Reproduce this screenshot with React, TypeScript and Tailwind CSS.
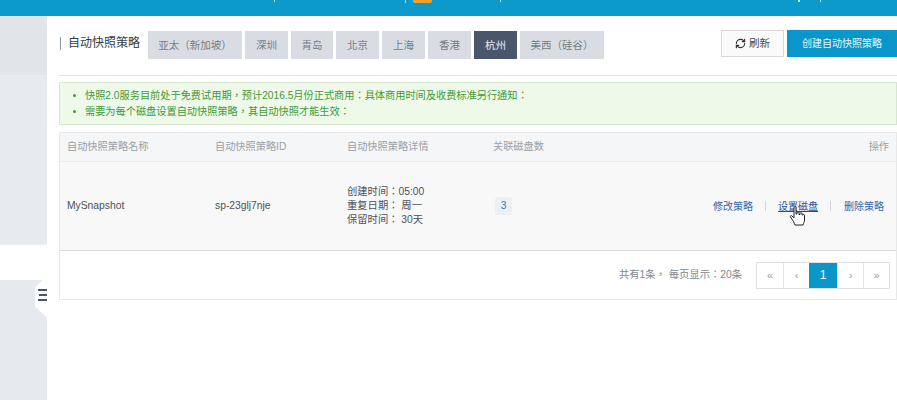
import React from "react";
import { RefreshCw } from "lucide-react";

const font = "font-['Liberation_Sans','Noto_Sans_CJK_TC',sans-serif]";

const regions = [
  { name: "亚太（新加坡）", width: "w-[94px]" },
  { name: "深圳", width: "w-[43px]" },
  { name: "青岛", width: "w-[42px]" },
  { name: "北京", width: "w-[43px]" },
  { name: "上海", width: "w-[43px]" },
  { name: "香港", width: "w-[43px]" },
  { name: "杭州", width: "w-[43px]", active: true },
  { name: "美西（硅谷）", width: "w-[84px]" },
];

const Pager = ({ label, active }: { label: string; active?: boolean }) => (
  <div
    className={
      active
        ? "w-[28px] flex items-center justify-center bg-[#0a96c9] text-white text-[12px]"
        : "w-[26px] flex items-center justify-center border-l border-[#e4e6e8] first:border-l-0 text-[#9aa0a6] text-[11px]"
    }
  >
    {label}
  </div>
);

const App = () => {
  return (
    <div className={`${font} w-[897px] h-[400px] overflow-hidden bg-white flex flex-col`}>
      {/* top bar */}
      <div className="relative h-4 shrink-0 bg-[#0b9acb]">
        <div className="absolute left-[413px] top-0 w-[19px] h-[3px] rounded-b-[2px] bg-[#f0a02c]" />
        <div className="absolute left-[405px] top-0 w-px h-[3px] bg-[#cfeaf4]" />
        <div className="absolute left-[274px] top-0 w-px h-[2px] bg-[#cfeaf4]" />
        <div className="absolute left-[500px] top-0 w-px h-[2px] bg-[#cfeaf4]" />
        <div className="absolute left-[798px] top-0 w-[2px] h-[2px] bg-[#cfeaf4]" />
        <div className="absolute left-[820px] top-0 w-px h-[2px] bg-[#cfeaf4]" />
      </div>

      <div className="flex flex-1 min-h-0">
        {/* sidebar */}
        <div className="relative w-[47px] shrink-0 flex flex-col">
          <div className="h-[59px] bg-[#e2e5e8]" />
          <div className="h-[170px] bg-[#e8ebee]" />
          <div className="h-[35px] bg-white" />
          <div className="flex-1 bg-[#e6e9ed]" />
          {/* collapse handle */}
          <div className="absolute left-[35px] top-[260px] w-3 h-[42px] bg-white [clip-path:polygon(100%_0,100%_100%,0_72%,0_28%)]" />
          <div className="absolute left-[38px] top-[273px] w-[9px] flex flex-col gap-[3px]">
            <div className="h-[2px] bg-[#4a5566]" />
            <div className="h-[2px] ml-[1px] bg-[#4a5566]" />
            <div className="h-[2px] bg-[#4a5566]" />
          </div>
        </div>

        {/* main */}
        <div className="flex-1 min-w-0 pl-[12px] pt-[15px]">
          <div className="flex items-start h-[45px] border-b border-[#e4e4e4]">
            <div className="flex items-center h-[24px] ml-px gap-[7px]">
              <div className="w-px h-[13px] bg-[#8a98a6]" />
              <span className="text-[12px] leading-[14px] text-[#333a42] whitespace-nowrap">自动快照策略</span>
            </div>
            <div className="flex gap-[3px] ml-[8px]">
              {regions.map((r) => (
                <div
                  key={r.name}
                  className={
                    r.active
                      ? `${r.width} h-[28px] pt-[2px] flex items-center justify-center text-[10.5px] bg-[#4a566b] text-[#e6e8ec] whitespace-nowrap`
                      : `${r.width} h-[28px] pt-[2px] flex items-center justify-center text-[10.5px] bg-[#d9dde3] text-[#757d87] whitespace-nowrap`
                  }
                >
                  {r.name}
                </div>
              ))}
            </div>
            <div className="ml-auto -mt-px flex gap-[3px]">
              <div className="w-[63px] h-[27px] flex items-center justify-center gap-[3px] border border-[#d9d9d9] bg-[#fafafa] text-[10.5px] text-[#444b52]">
                <RefreshCw size={11} strokeWidth={2.5} className="text-[#333]" />
                刷新
              </div>
              <div className="w-[110px] h-[27px] flex items-center justify-center bg-[#0a96c9] text-[10px] text-[#e8f6fb]">
                创建自动快照策略
              </div>
            </div>
          </div>

          {/* notice */}
          <div className="mt-[6px] h-[43px] border border-[#d9e6cf] bg-[#eef9e9] pl-[13px] flex flex-col justify-center text-[10.2px] leading-[16px] text-[#3e9a3a]">
            <div className="flex items-center">
              <span className="w-[3px] h-[3px] rounded-full bg-[#3e9a3a] mr-[9px]" />
              快照2.0服务目前处于免费试用期，预计2016.5月份正式商用：具体商用时间及收费标准另行通知：
            </div>
            <div className="flex items-center">
              <span className="w-[3px] h-[3px] rounded-full bg-[#3e9a3a] mr-[9px]" />
              需要为每个磁盘设置自动快照策略，其自动快照才能生效：
            </div>
          </div>

          {/* table */}
          <div className="mt-[7px] border border-[#e8e8e8]">
            <div className="flex items-center h-[29px] bg-[#f5f6f7] border-b border-[#ebebeb] text-[10.2px] text-[#9aa1a8]">
              <div className="w-[148px] pl-[7px]">自动快照策略名称</div>
              <div className="w-[132px] pl-[7px]">自动快照策略ID</div>
              <div className="w-[146px] pl-[7px]">自动快照策略详情</div>
              <div className="pl-[7px]">关联磁盘数</div>
              <div className="ml-auto pr-[7px]">操作</div>
            </div>
            <div className="flex items-center h-[89px] bg-[#f8f8f8] border-b border-[#dedede] text-[10.3px] text-[#4b5259]">
              <div className="w-[148px] pl-[7px]">MySnapshot</div>
              <div className="w-[132px] pl-[7px]">sp-23glj7nje</div>
              <div className="w-[146px] pl-[7px] leading-[14px]">
                <div>创建时间：05:00</div>
                <div>重复日期： 周一</div>
                <div>保留时间： 30天</div>
              </div>
              <div className="pl-[9px] w-[100px]">
                <span className="inline-flex items-center justify-center w-[17px] h-[18px] rounded-[3px] bg-[#edf0f3] text-[#3f78b5]">3</span>
              </div>
              <div className="ml-auto flex items-center pr-[12px] text-[#3466ad] text-[10px]">
                <span>修改策略</span>
                <span className="w-px h-[10px] bg-[#d5d8db] ml-[12px] mr-[12px]" />
                <span className="relative text-[#1f4f96] underline">
                  设置磁盘
                  {/* hand cursor */}
                  <svg className="absolute left-[11px] top-[7px]" width="17" height="21" viewBox="0 0 17 21">
                    <path
                      d="M5 1.5c0-1 2-1 2 0V8l1 0V6.5c0-1 2-1 2 0V8.5l1 0V7.5c0-1 2-1 2 0V9l.8 0c0-1 1.7-.8 1.7.3V14c0 2-1 3-1.500 5H6l-1.500-3.500L1.500 11c-.7-1 .7-2 1.500-1l2 2z"
                      fill="#fff"
                      stroke="#222"
                      strokeWidth="1"
                      strokeLinejoin="round"
                    />
                  </svg>
                </span>
                <span className="w-px h-[10px] bg-[#d5d8db] ml-[12px] mr-[13px]" />
                <span>删除策略</span>
              </div>
            </div>
            <div className="flex items-center justify-end h-[48px] pr-[6px]">
              <span className="text-[10.3px] text-[#80878e] mr-[14px]">共有1条， 每页显示：20条</span>
              <div className="flex h-[27px] border border-[#dfe1e3]">
                <Pager label="«" />
                <Pager label="‹" />
                <Pager label="1" active />
                <Pager label="›" />
                <Pager label="»" />
              </div>
            </div>
          </div>
        </div>
      </div>
    </div>
  );
};

export default App;
